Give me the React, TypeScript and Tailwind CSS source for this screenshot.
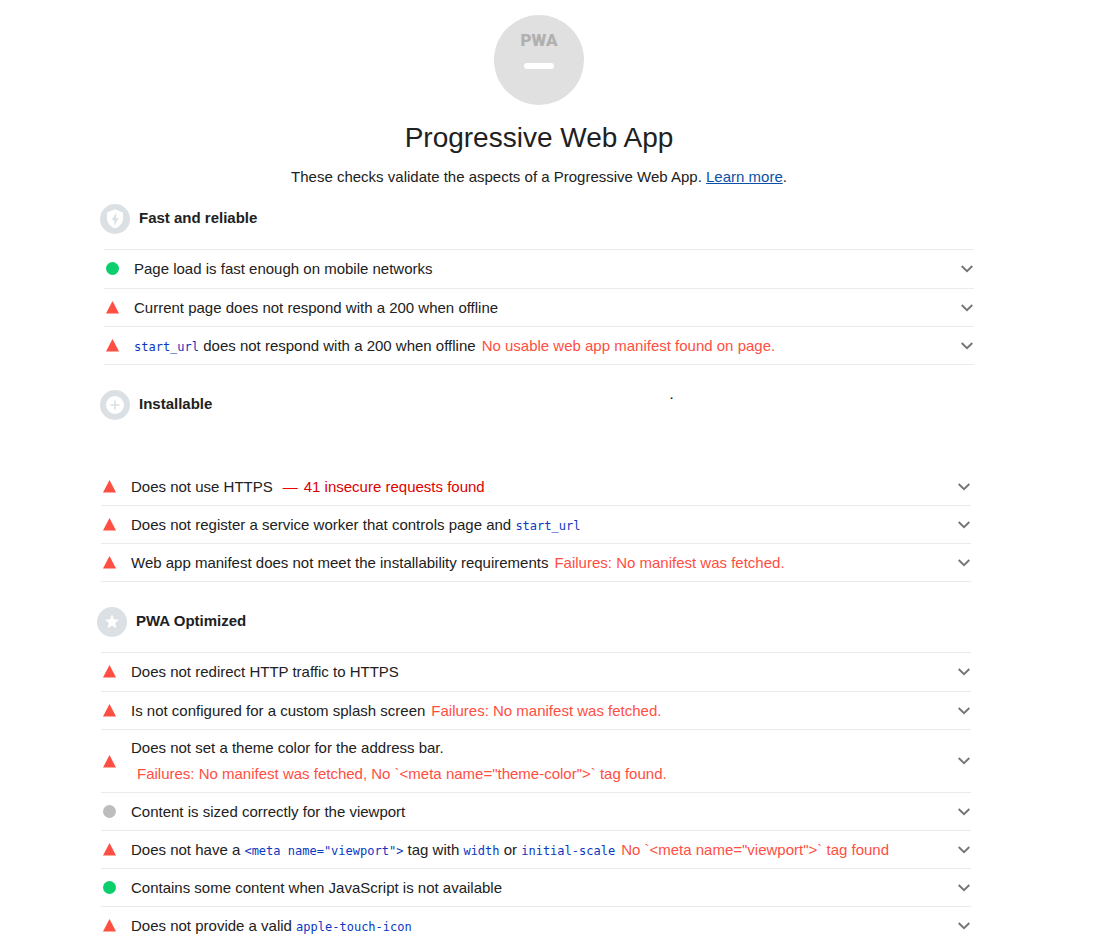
import type { ReactNode } from "react";

type Status = "pass" | "fail" | "none";

function StatusMark({ status }: { status: Status }) {
  if (status === "fail") {
    return (
      <svg className="h-[13px] w-[13px] shrink-0" viewBox="0 0 13 13" aria-label="Failed">
        <path d="M6.5 0L13 12.6H0z" fill="#ff4e42" />
      </svg>
    );
  }
  return (
    <svg className="h-[13px] w-[13px] shrink-0" viewBox="0 0 13 13" aria-label={status === "pass" ? "Passed" : "Not applicable"}>
      <circle cx="6.5" cy="6.5" r="6.5" fill={status === "pass" ? "#0cce6b" : "#bdbdbd"} />
    </svg>
  );
}

function Chevron() {
  return (
    <svg className="ml-auto h-2 w-3 shrink-0" viewBox="0 0 12 8" fill="none" stroke="#757575" strokeWidth="1.9" aria-hidden="true">
      <path d="M0.7 1L6 6.1L11.3 1" />
    </svg>
  );
}

function Code({ children }: { children: ReactNode }) {
  return <code className="font-['DejaVu_Sans_Mono',monospace] text-xs text-[#0938c2]">{children}</code>;
}

function Failure({ children }: { children: ReactNode }) {
  return <span className="ml-1.5 text-[#ff4e42]">{children}</span>;
}

function Audit({ status, tall = false, children }: { status: Status; tall?: boolean; children: ReactNode }) {
  return (
    <li className="border-b border-[#ebebeb]">
      <button
        type="button"
        aria-expanded="false"
        className={`flex w-full items-center gap-[15px] pr-px pl-0.5 text-left ${tall ? "min-h-[62px] leading-[26px]" : "min-h-[37px] leading-5"}`}
      >
        <StatusMark status={status} />
        <span>{children}</span>
        <Chevron />
      </button>
    </li>
  );
}

function AuditList({ ruled = true, children }: { ruled?: boolean; children: ReactNode }) {
  return <ul className={ruled ? "border-t border-[#ebebeb] [&>li:first-child]:pb-px" : ""}>{children}</ul>;
}

function GroupHeading({ icon, title }: { icon: ReactNode; title: string }) {
  return (
    <div className="-ml-1 flex h-[30px] grow items-center gap-[9px]">
      <svg className="h-[30px] w-[30px] shrink-0" viewBox="0 0 30 30" aria-hidden="true">
        <circle cx="15" cy="15" r="15" fill="#dae0e3" />
        {icon}
      </svg>
      <h2 className="pb-0.5 leading-5 font-bold">{title}</h2>
    </div>
  );
}

export default function App() {
  return (
    <main className="bg-white pt-[15px] pr-[128px] pl-[104px] font-['Liberation_Sans',Arial,sans-serif] text-[15px] text-[#212121]">
      <header className="flex flex-col items-center">
        <div className="flex h-[90px] w-[90px] flex-col items-center rounded-full bg-[#e0e0e0] pt-4">
          <span className="font-['Roboto',sans-serif] text-[17px] leading-[18px] font-black text-[#b0b0b0]">PWA</span>
          <span className="mt-3.5 h-1.5 w-[30px] rounded-full bg-white" />
        </div>
        <h1 className="mt-[17px] text-[28px] leading-8">Progressive Web App</h1>
        <p className="mt-[13px] leading-5">
          These checks validate the aspects of a Progressive Web App.{" "}
          <a href="#learn-more" className="text-[#0c50a7] underline">Learn more</a>.
        </p>
      </header>

      <section className="mt-[17px]">
        <div className="mb-[15px]">
          <GroupHeading
            title="Fast and reliable"
            icon={
              <>
                <path d="M15 5.2l8 3.2v5.8c0 4.6-3.4 8.8-8 10.1-4.6-1.3-8-5.5-8-10.1V8.4z" fill="#fff" />
                <path d="M16.4 8.5L11.6 15.9h2.7v5.8l4.4-7.8h-2.8z" fill="#dae0e3" />
              </>
            }
          />
        </div>
        <AuditList>
          <Audit status="pass">Page load is fast enough on mobile networks</Audit>
          <Audit status="fail">Current page does not respond with a 200 when offline</Audit>
          <Audit status="fail">
            <Code>start_url</Code> does not respond with a 200 when offline
            <Failure>No usable web app manifest found on page.</Failure>
          </Audit>
        </AuditList>
      </section>

      <section className="mt-[25px]">
        <div className="mb-12 flex items-start">
          <GroupHeading
            title="Installable"
            icon={
              <>
                <circle cx="15" cy="15" r="9" fill="#fff" />
                <path d="M15 10.5v9M10.5 15h9" stroke="#dae0e3" strokeWidth="1.6" fill="none" />
              </>
            }
          />
          <span className="w-[35%] shrink-0 leading-2 text-black">.</span>
        </div>
        <div className="mr-[3px] -ml-[3px]">
          <AuditList ruled={false}>
            <Audit status="fail">
              Does not use HTTPS
              <span className="ml-2.5 text-[#ee0000]">—</span>
              <span className="ml-1.5 text-[#dd0000]">41 insecure requests found</span>
            </Audit>
            <Audit status="fail">
              Does not register a service worker that controls page and <Code>start_url</Code>
            </Audit>
            <Audit status="fail">
              Web app manifest does not meet the installability requirements
              <Failure>Failures: No manifest was fetched.</Failure>
            </Audit>
          </AuditList>
        </div>
      </section>

      <section className="mt-[25px] mr-[3px] -ml-[3px]">
        <div className="mb-[15px]">
          <GroupHeading
            title="PWA Optimized"
            icon={<path d="M15 7.5l1.9 4.8 5.2.4-4 3.4 1.300 5.100L15 18.400l-4.400 2.800 1.300-5.100-4-3.400 5.200-.4z" fill="#fff" />}
          />
        </div>
        <AuditList>
          <Audit status="fail">Does not redirect HTTP traffic to HTTPS</Audit>
          <Audit status="fail">
            Is not configured for a custom splash screen
            <Failure>Failures: No manifest was fetched.</Failure>
          </Audit>
          <Audit status="fail" tall>
            Does not set a theme color for the address bar.
            <br />
            <Failure>{'Failures: No manifest was fetched, No `<meta name="theme-color">` tag found.'}</Failure>
          </Audit>
          <Audit status="none">Content is sized correctly for the viewport</Audit>
          <Audit status="fail">
            Does not have a <Code>{'<meta name="viewport">'}</Code> tag with <Code>width</Code> or <Code>initial-scale</Code>
            <Failure>{'No `<meta name="viewport">` tag found'}</Failure>
          </Audit>
          <Audit status="pass">Contains some content when JavaScript is not available</Audit>
          <Audit status="fail">
            Does not provide a valid <Code>apple-touch-icon</Code>
          </Audit>
        </AuditList>
      </section>
    </main>
  );
}
